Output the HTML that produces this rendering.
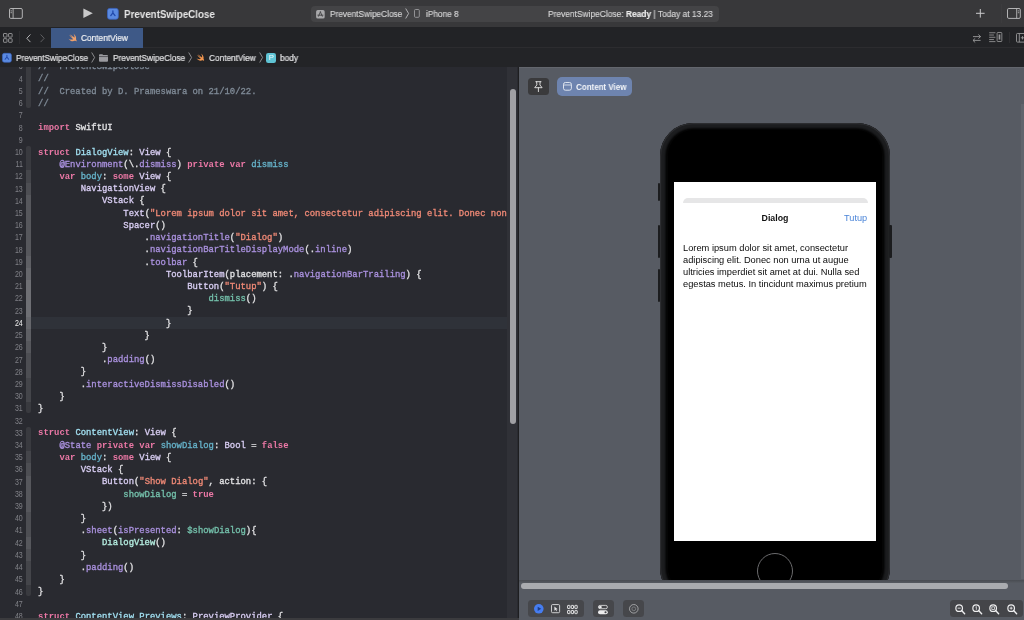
<!DOCTYPE html>
<html lang="en">
<head>
<meta charset="utf-8">
<title>PreventSwipeClose — ContentView.swift</title>
<style>
*{box-sizing:border-box;margin:0;padding:0}
html,body{width:1024px;height:620px;overflow:hidden;background:#292a30}
body{position:relative;font-family:"Liberation Sans",sans-serif;color:#dfdfe0;-webkit-font-smoothing:antialiased}
.abs{position:absolute}
svg{position:absolute;overflow:visible}
#title,.tb,.cr,#tab span,#cvpill span,#dlg,#tutup,#lorem{will-change:transform}

/* ---------- top toolbar ---------- */
#toolbar{position:absolute;left:0;top:0;width:1024px;height:27.5px;background:#38383a;border-bottom:1px solid #161618}
#title{position:absolute;left:123.5px;top:7.6px;transform:scaleX(0.916);transform-origin:0 50%;font-size:10.7px;line-height:13px;font-weight:bold;color:#e6e6e6;white-space:nowrap}
#pill{position:absolute;left:310.5px;top:5.6px;width:408px;height:16px;border-radius:4px;background:#444446}
.tb{position:absolute;top:7.5px;transform:scaleX(0.933);transform-origin:0 50%;font-size:8.9px;line-height:12px;color:#d6d6d7;-webkit-text-stroke:0.15px;white-space:nowrap}
.tb b{color:#ececec}

/* ---------- tab bar ---------- */
#tabbar{position:absolute;left:0;top:27px;width:1024px;height:20.5px;background:#222326;border-bottom:1px solid #2c2c2f}
#tab{position:absolute;left:51px;top:1px;width:92px;height:19.8px;background:#3e5987}
#tab span{position:absolute;left:29.5px;top:4px;-webkit-text-stroke:0.2px;transform:scaleX(0.918);transform-origin:0 50%;font-size:9.05px;line-height:12px;color:#f2f3f5;white-space:nowrap}

/* ---------- breadcrumb ---------- */
#crumbs{position:absolute;left:0;top:47.5px;width:1024px;height:19.5px;background:#232427}
.cr{position:absolute;top:4px;transform:scaleX(0.925);transform-origin:0 50%;font-size:8.95px;line-height:12px;color:#e2e2e4;-webkit-text-stroke:0.2px;white-space:nowrap}

/* ---------- editor ---------- */
#editor{position:absolute;left:0;top:67px;width:507.5px;height:551px;background:#292a30;overflow:hidden}
#codewrap{position:absolute;left:0;top:0;width:507.5px;height:551px;will-change:transform}
.cl,.ln{position:absolute;height:12.21px;line-height:12.21px;white-space:pre}
.cl{left:38.1px;font-family:"Liberation Mono",monospace;font-size:8.89px;color:#e1e1e3;-webkit-text-stroke:0.32px}
.ln{left:0;width:22.8px;text-align:right;font-family:"Liberation Sans",sans-serif;font-size:8.4px;color:#808187;transform:scaleX(0.84);transform-origin:100% 50%}
.ln.cur{color:#f0f0f0}
.rb{position:absolute;left:26.1px;width:4.8px;height:12.4px}
.hl{position:absolute;left:30.9px;width:480px;height:12.3px;background:#2f3239}
.k{color:#ec78a6;font-weight:bold;-webkit-text-stroke:0}
.c{color:#7f8a96}
.s{color:#ef8976}
.t{color:#a2dff0}
.d{color:#66b3ca}
.o{color:#d9cef3}
.u{color:#aa91de}
.g{color:#74c0ab}
.m{color:#b4ecdf}
#edbot{position:absolute;left:0;top:618px;width:519px;height:2px;background:#3b3b3e}
#vtrack{position:absolute;left:507.2px;top:67px;width:10.3px;height:551px;background:#303137}
#vthumb{position:absolute;left:509.8px;top:88.8px;width:6px;height:335.4px;border-radius:3px;background:#a0a0a4}
#vdiv{position:absolute;left:517.5px;top:67px;width:1.5px;height:553px;background:#1e1e20}

/* ---------- preview ---------- */
#preview{position:absolute;left:519px;top:67px;width:505px;height:553px;background:#575b63;overflow:hidden}
#ptop{position:absolute;left:0;top:0;width:505px;height:1px;background:#63666d}
#pin{position:absolute;left:9px;top:10.5px;width:20.5px;height:17.5px;border-radius:3.5px;background:#3a3a3c}
#cvpill{position:absolute;left:37.5px;top:9.5px;width:75.5px;height:19.5px;border-radius:5px;background:#6e84af}
#cvpill span{position:absolute;left:19px;top:4px;transform:scaleX(0.936);transform-origin:0 50%;font-size:8.6px;line-height:12px;font-weight:bold;color:#f4f6fa;white-space:nowrap;letter-spacing:-0.04px}
.grp{position:absolute;top:533.2px;height:17px;border-radius:3.5px;background:#46474b}
#hscroll{position:absolute;left:2px;top:516.2px;width:487px;height:5.8px;border-radius:2.9px;background:#aaacb0}
#rtrack{position:absolute;left:501.5px;top:37px;width:3.5px;height:475px;background:#60646c}

/* phone */
#phone{position:absolute;left:141.3px;top:55.8px;width:229.4px;height:478px;background:#000;border-radius:33px;box-shadow:inset 0 0 0 1.2px #2c2d30, inset 0 0 2.5px 5.6px #1d1e20}
#bezel{position:absolute;left:7.4px;top:7.4px;width:214.6px;height:463px;background:#000;border-radius:25.5px;box-shadow:0 0 1.2px 0.6px #060606}
.sb{position:absolute;width:2.4px;background:#1b1c1e;border-radius:1px}
#screen{position:absolute;left:155px;top:115.4px;width:202px;height:358.6px;background:#fff;overflow:hidden;color:#000}
#sheetbar{position:absolute;left:8.5px;top:15.4px;width:185px;height:5.5px;background:#e6e6e7;border-radius:5px 5px 0 0}
#dlg{position:absolute;left:0;width:202px;top:29.6px;text-align:center;font-size:8.8px;line-height:12px;font-weight:bold;color:#111}
#tutup{position:absolute;right:8.5px;top:29.6px;font-size:9.2px;line-height:12px;color:#4a84d8}
#lorem{position:absolute;left:9.2px;top:59.4px;width:192px;font-size:9.29px;line-height:12px;color:#0b0b0b;white-space:nowrap}
#home{position:absolute;left:238px;top:486px;width:36px;height:36px;border-radius:50%;border:1.1px solid #6b6b6d}
</style>
</head>
<body>

<!-- ================= TOOLBAR ================= -->
<div id="toolbar">
  <!-- sidebar toggle -->
  <svg style="left:9.1px;top:8px" width="14" height="11" viewBox="0 0 14 11"><rect x="0.5" y="0.5" width="12.8" height="9.9" rx="1.3" fill="none" stroke="#b9b9ba" stroke-width="0.95"/><path d="M4.1 0.5V10.4" stroke="#b9b9ba" stroke-width="0.9"/><path d="M1.5 2.9h1.5M1.5 4.7h1.5" stroke="#b9b9ba" stroke-width="0.8"/></svg>
  <!-- run -->
  <svg style="left:83px;top:8px" width="10" height="10.4" viewBox="0 0 10 10.4"><path d="M0.4 0.5 L9.8 5.2 L0.4 9.9 Z" fill="#c9c9ca"/></svg>
  <!-- app icon -->
  <svg style="left:107px;top:8px" width="11.8" height="11.6" viewBox="0 0 12 12"><rect x="0.4" y="0.4" width="11.2" height="11.2" rx="2.4" fill="#5b8ae0" stroke="#3a66c6" stroke-width="0.8"/><path d="M6 3 V5.2 M6 5 L3.8 7.8 M6 5 L8.2 7.8" stroke="#2149ab" stroke-width="1.35" fill="none" stroke-linecap="round"/></svg>
  <div id="title">PreventSwipeClose</div>

  <div id="pill"></div>
  <svg style="left:316px;top:9.5px" width="8.8" height="8.6" viewBox="0 0 12 12"><rect width="12" height="12" rx="2.4" fill="#a9a9ab"/><path d="M6 2.6 L3.4 8.7 M6 2.6 L8.6 8.7 M2.4 7.2 H9.6" stroke="#444446" stroke-width="1.3" fill="none" stroke-linecap="round"/></svg>
  <div class="tb" style="left:329.6px">PreventSwipeClose</div>
  <svg style="left:404.6px;top:8.4px" width="4.4" height="11" viewBox="0 0 4.4 11"><path d="M0.7 0.5 L3.6 5.5 L0.7 10.5" fill="none" stroke="#bdbdbf" stroke-width="0.9"/></svg>
  <svg style="left:414.2px;top:9.4px" width="5.8" height="8.8" viewBox="0 0 5.8 8.8"><rect x="0.5" y="0.5" width="4.8" height="7.8" rx="1" fill="none" stroke="#9d9d9f" stroke-width="0.9"/></svg>
  <div class="tb" style="left:425.8px">iPhone 8</div>
  <div class="tb" style="left:548.2px;font-size:9px">PreventSwipeClose: <b>Ready</b> | Today at 13.23</div>

  <!-- plus -->
  <svg style="left:976.4px;top:9.2px" width="8.6" height="8.6" viewBox="0 0 8.6 8.6"><path d="M4.3 0V8.6M0 4.3H8.6" stroke="#cbcbcc" stroke-width="1"/></svg>
  <div class="abs" style="left:1001.2px;top:4px;width:1px;height:19px;background:#3c3c3e"></div>
  <!-- right sidebar toggle -->
  <svg style="left:1007.1px;top:8px" width="14" height="11" viewBox="0 0 14 11"><rect x="0.5" y="0.5" width="12.8" height="9.9" rx="1.3" fill="none" stroke="#b9b9ba" stroke-width="0.95"/><path d="M9.7 0.5V10.4" stroke="#b9b9ba" stroke-width="0.9"/><path d="M10.8 2.9h1.5M10.8 4.7h1.5" stroke="#b9b9ba" stroke-width="0.8"/></svg>
</div>

<!-- ================= TAB BAR ================= -->
<div id="tabbar">
  <svg style="left:2.6px;top:6px" width="9.6" height="9.8" viewBox="0 0 9.6 9.8"><g fill="none" stroke="#9a9a9c" stroke-width="0.9"><rect x="0.5" y="0.5" width="3.5" height="3.6" rx="0.5"/><rect x="5.6" y="0.5" width="3.5" height="3.6" rx="0.5"/><rect x="0.5" y="5.7" width="3.5" height="3.6" rx="0.5"/><rect x="5.6" y="5.7" width="3.5" height="3.6" rx="0.5"/></g></svg>
  <div class="abs" style="left:18.6px;top:4px;width:1px;height:13px;background:#2d2d30"></div>
  <svg style="left:25.6px;top:6.6px" width="5" height="8.6" viewBox="0 0 5 8.6"><path d="M4.4 0.5 L0.8 4.3 L4.4 8.1" fill="none" stroke="#b4b4b6" stroke-width="1"/></svg>
  <svg style="left:39.8px;top:6.6px" width="5" height="8.6" viewBox="0 0 5 8.6"><path d="M0.6 0.5 L4.2 4.3 L0.6 8.1" fill="none" stroke="#5e5e61" stroke-width="1"/></svg>
  <div id="tab">
    <svg style="left:17.2px;top:4.6px" width="9.4" height="9.2" viewBox="0 0 10 10"><path d="M5.6 0.6 C8.4 2.6 9.2 5.2 8.6 6.8 C9.4 7.8 9.3 8.8 9.2 9.3 C8.6 8.3 7.8 8.2 7.2 8.5 C5.2 9.6 2.2 8.8 0.5 6.2 C2.2 7.3 4.2 7.5 5.6 6.7 C3.6 5.2 2 3.2 1.3 2 C2.8 3.3 4.4 4.5 5.2 5 C4.2 4 2.9 2.3 2.4 1.4 C4 2.9 6 4.6 6.9 5.1 C7.3 3.8 6.8 2.1 5.6 0.6 Z" fill="#f0a06a"/></svg>
    <span>ContentView</span>
  </div>
  <!-- right icons -->
  <svg style="left:972.4px;top:6.6px" width="9.6" height="9" viewBox="0 0 9.6 9"><g fill="none" stroke="#98989a" stroke-width="0.9"><path d="M1 2.6H8.6M6.4 0.5L8.6 2.6L6.4 4.6"/><path d="M8.6 6.4H1M3.2 4.4L1 6.4L3.2 8.5"/></g></svg>
  <svg style="left:989.2px;top:5.4px" width="13.6" height="10" viewBox="0 0 14 10.6"><g fill="none" stroke="#98989a" stroke-width="0.9"><path d="M0 0.8H6.6M0 3.2H5M0 5.6H6.6M0 8H5M0 10.2H6.6"/><rect x="8.4" y="0.5" width="5" height="9.6" rx="0.8"/><rect x="10" y="2.6" width="1.8" height="5.4" fill="#98989a" stroke="none"/></g></svg>
  <div class="abs" style="left:1008.8px;top:5px;width:1px;height:11px;background:#2e2e31"></div>
  <svg style="left:1016px;top:6px" width="8" height="9.6" viewBox="0 0 8 9.6"><g fill="none" stroke="#98989a" stroke-width="0.9"><rect x="0.5" y="0.5" width="12" height="8.6" rx="0.9"/><path d="M3.3 0.5V9.1M4.8 4.8H8M6.5 3.1V6.5"/></g></svg>
</div>

<!-- ================= BREADCRUMBS ================= -->
<div id="crumbs">
  <svg style="left:2.2px;top:5.4px" width="9.8" height="9.6" viewBox="0 0 12 12"><rect x="0.4" y="0.4" width="11.2" height="11.2" rx="2.4" fill="#5b8ae0" stroke="#3a66c6" stroke-width="0.8"/><path d="M6 3 V5.2 M6 5 L3.8 7.8 M6 5 L8.2 7.8" stroke="#2149ab" stroke-width="1.35" fill="none" stroke-linecap="round"/></svg>
  <div class="cr" style="left:15.5px">PreventSwipeClose</div>
  <svg style="left:91px;top:4.4px" width="4.4" height="11" viewBox="0 0 4.4 11"><path d="M0.7 0.5 L3.6 5.5 L0.7 10.5" fill="none" stroke="#98989b" stroke-width="0.9"/></svg>
  <svg style="left:98.8px;top:6.2px" width="9" height="7.8" viewBox="0 0 9.4 7.8"><path d="M0 1 Q0 0 1 0 H3.4 L4.4 1 H8.4 Q9.4 1 9.4 2 V6.8 Q9.4 7.8 8.4 7.8 H1 Q0 7.8 0 6.8 Z" fill="#9b9ba0"/><path d="M0 2.5H9.4" stroke="#2a2a2d" stroke-width="0.6"/></svg>
  <div class="cr" style="left:113px">PreventSwipeClose</div>
  <svg style="left:187.6px;top:4.4px" width="4.4" height="11" viewBox="0 0 4.4 11"><path d="M0.7 0.5 L3.6 5.5 L0.7 10.5" fill="none" stroke="#98989b" stroke-width="0.9"/></svg>
  <svg style="left:195.8px;top:5.8px" width="8.8" height="8.6" viewBox="0 0 10 10"><path d="M5.6 0.6 C8.4 2.6 9.2 5.2 8.6 6.8 C9.4 7.8 9.3 8.8 9.2 9.3 C8.6 8.3 7.8 8.2 7.2 8.5 C5.2 9.6 2.2 8.8 0.5 6.2 C2.2 7.3 4.2 7.5 5.6 6.7 C3.6 5.2 2 3.2 1.3 2 C2.8 3.3 4.4 4.5 5.2 5 C4.2 4 2.9 2.3 2.4 1.4 C4 2.9 6 4.6 6.9 5.1 C7.3 3.8 6.8 2.1 5.6 0.6 Z" fill="#f2964f"/></svg>
  <div class="cr" style="left:208.6px">ContentView</div>
  <svg style="left:258.6px;top:4.4px" width="4.4" height="11" viewBox="0 0 4.4 11"><path d="M0.7 0.5 L3.6 5.5 L0.7 10.5" fill="none" stroke="#98989b" stroke-width="0.9"/></svg>
  <div class="abs" style="left:266.2px;top:5.4px;width:10.2px;height:9.8px;border-radius:2.2px;background:#60c4d5;color:#f4fcfd;font-size:7.8px;line-height:10px;text-align:center">P</div>
  <div class="cr" style="left:279.8px">body</div>
</div>

<!-- ================= EDITOR ================= -->
<div id="editor"><div id="codewrap">
<div class="rb" style="top:-6.28px;background:#3a3b40;height:12.1px;border-radius:2px 2px 0 0"></div>
<div class="ln" style="top:-6.53px">3</div>
<div class="cl" style="top:-5.83px"><span class="c">//  PreventSwipeClose</span></div>
<div class="rb" style="top:5.63px;background:#3a3b40"></div>
<div class="ln" style="top:5.68px">4</div>
<div class="cl" style="top:6.38px"><span class="c">//</span></div>
<div class="rb" style="top:17.84px;background:#3a3b40"></div>
<div class="ln" style="top:17.89px">5</div>
<div class="cl" style="top:18.59px"><span class="c">//  Created by D. Prameswara on 21/10/22.</span></div>
<div class="rb" style="top:30.05px;background:#3a3b40;height:10.8px;border-radius:0 0 2px 2px"></div>
<div class="ln" style="top:30.10px">6</div>
<div class="cl" style="top:30.80px"><span class="c">//</span></div>
<div class="ln" style="top:42.31px">7</div>
<div class="ln" style="top:54.52px">8</div>
<div class="cl" style="top:55.22px"><span class="k">import</span> SwiftUI</div>
<div class="ln" style="top:66.73px">9</div>
<div class="rb" style="top:79.19px;background:#393a3f;height:12.1px;border-radius:2px 2px 0 0"></div>
<div class="ln" style="top:78.94px">10</div>
<div class="cl" style="top:79.64px"><span class="k">struct</span> <span class="t">DialogView</span>: <span class="o">View</span> {</div>
<div class="rb" style="top:91.10px;background:#393a3f"></div>
<div class="ln" style="top:91.15px">11</div>
<div class="cl" style="top:91.85px">    <span class="u">@Environment</span>(\.<span class="u">dismiss</span>) <span class="k">private</span> <span class="k">var</span> <span class="d">dismiss</span></div>
<div class="rb" style="top:103.31px;background:#44454a"></div>
<div class="ln" style="top:103.36px">12</div>
<div class="cl" style="top:104.06px">    <span class="k">var</span> <span class="d">body</span>: <span class="k">some</span> <span class="o">View</span> {</div>
<div class="rb" style="top:115.52px;background:#4d4e53"></div>
<div class="ln" style="top:115.57px">13</div>
<div class="cl" style="top:116.27px">        <span class="o">NavigationView</span> {</div>
<div class="rb" style="top:127.73px;background:#56575c"></div>
<div class="ln" style="top:127.78px">14</div>
<div class="cl" style="top:128.48px">            <span class="o">VStack</span> {</div>
<div class="rb" style="top:139.94px;background:#56575c"></div>
<div class="ln" style="top:139.99px">15</div>
<div class="cl" style="top:140.69px">                <span class="o">Text</span>(<span class="s">"Lorem ipsum dolor sit amet, consectetur adipiscing elit. Donec non</span></div>
<div class="rb" style="top:152.15px;background:#56575c"></div>
<div class="ln" style="top:152.20px">16</div>
<div class="cl" style="top:152.90px">                <span class="o">Spacer</span>()</div>
<div class="rb" style="top:164.36px;background:#56575c"></div>
<div class="ln" style="top:164.41px">17</div>
<div class="cl" style="top:165.11px">                    .<span class="u">navigationTitle</span>(<span class="s">"Dialog"</span>)</div>
<div class="rb" style="top:176.57px;background:#56575c"></div>
<div class="ln" style="top:176.62px">18</div>
<div class="cl" style="top:177.32px">                    .<span class="u">navigationBarTitleDisplayMode</span>(.<span class="u">inline</span>)</div>
<div class="rb" style="top:188.78px;background:#5e5f64"></div>
<div class="ln" style="top:188.83px">19</div>
<div class="cl" style="top:189.53px">                    .<span class="u">toolbar</span> {</div>
<div class="rb" style="top:200.99px;background:#66676c"></div>
<div class="ln" style="top:201.04px">20</div>
<div class="cl" style="top:201.74px">                        <span class="o">ToolbarItem</span>(placement: .<span class="u">navigationBarTrailing</span>) {</div>
<div class="rb" style="top:213.20px;background:#6e6f74"></div>
<div class="ln" style="top:213.25px">21</div>
<div class="cl" style="top:213.95px">                            <span class="o">Button</span>(<span class="s">"Tutup"</span>) {</div>
<div class="rb" style="top:225.41px;background:#6e6f74"></div>
<div class="ln" style="top:225.46px">22</div>
<div class="cl" style="top:226.16px">                                <span class="g">dismiss</span>()</div>
<div class="rb" style="top:237.62px;background:#6e6f74"></div>
<div class="ln" style="top:237.67px">23</div>
<div class="cl" style="top:238.37px">                            }</div>
<div class="hl" style="top:250.13px"></div>
<div class="rb" style="top:249.83px;background:#66676c"></div>
<div class="ln cur" style="top:249.88px">24</div>
<div class="cl" style="top:250.58px">                        }</div>
<div class="rb" style="top:262.04px;background:#5e5f64"></div>
<div class="ln" style="top:262.09px">25</div>
<div class="cl" style="top:262.79px">                    }</div>
<div class="rb" style="top:274.25px;background:#56575c"></div>
<div class="ln" style="top:274.30px">26</div>
<div class="cl" style="top:275.00px">            }</div>
<div class="rb" style="top:286.46px;background:#4d4e53"></div>
<div class="ln" style="top:286.51px">27</div>
<div class="cl" style="top:287.21px">            .<span class="u">padding</span>()</div>
<div class="rb" style="top:298.67px;background:#4d4e53"></div>
<div class="ln" style="top:298.72px">28</div>
<div class="cl" style="top:299.42px">        }</div>
<div class="rb" style="top:310.88px;background:#44454a"></div>
<div class="ln" style="top:310.93px">29</div>
<div class="cl" style="top:311.63px">        .<span class="u">interactiveDismissDisabled</span>()</div>
<div class="rb" style="top:323.09px;background:#44454a"></div>
<div class="ln" style="top:323.14px">30</div>
<div class="cl" style="top:323.84px">    }</div>
<div class="rb" style="top:335.30px;background:#393a3f;height:10.8px;border-radius:0 0 2px 2px"></div>
<div class="ln" style="top:335.35px">31</div>
<div class="cl" style="top:336.05px">}</div>
<div class="ln" style="top:347.56px">32</div>
<div class="rb" style="top:360.02px;background:#393a3f;height:12.1px;border-radius:2px 2px 0 0"></div>
<div class="ln" style="top:359.77px">33</div>
<div class="cl" style="top:360.47px"><span class="k">struct</span> <span class="t">ContentView</span>: <span class="o">View</span> {</div>
<div class="rb" style="top:371.93px;background:#393a3f"></div>
<div class="ln" style="top:371.98px">34</div>
<div class="cl" style="top:372.68px">    <span class="u">@State</span> <span class="k">private</span> <span class="k">var</span> <span class="d">showDialog</span>: <span class="o">Bool</span> = <span class="k">false</span></div>
<div class="rb" style="top:384.14px;background:#44454a"></div>
<div class="ln" style="top:384.19px">35</div>
<div class="cl" style="top:384.89px">    <span class="k">var</span> <span class="d">body</span>: <span class="k">some</span> <span class="o">View</span> {</div>
<div class="rb" style="top:396.35px;background:#4d4e53"></div>
<div class="ln" style="top:396.40px">36</div>
<div class="cl" style="top:397.10px">        <span class="o">VStack</span> {</div>
<div class="rb" style="top:408.56px;background:#56575c"></div>
<div class="ln" style="top:408.61px">37</div>
<div class="cl" style="top:409.31px">            <span class="o">Button</span>(<span class="s">"Show Dialog"</span>, action: {</div>
<div class="rb" style="top:420.77px;background:#56575c"></div>
<div class="ln" style="top:420.82px">38</div>
<div class="cl" style="top:421.52px">                <span class="g">showDialog</span> = <span class="k">true</span></div>
<div class="rb" style="top:432.98px;background:#56575c"></div>
<div class="ln" style="top:433.03px">39</div>
<div class="cl" style="top:433.73px">            })</div>
<div class="rb" style="top:445.19px;background:#4d4e53"></div>
<div class="ln" style="top:445.24px">40</div>
<div class="cl" style="top:445.94px">        }</div>
<div class="rb" style="top:457.40px;background:#4d4e53"></div>
<div class="ln" style="top:457.45px">41</div>
<div class="cl" style="top:458.15px">        .<span class="u">sheet</span>(<span class="u">isPresented</span>: <span class="g">$showDialog</span>){</div>
<div class="rb" style="top:469.61px;background:#56575c"></div>
<div class="ln" style="top:469.66px">42</div>
<div class="cl" style="top:470.36px">            <span class="m">DialogView</span>()</div>
<div class="rb" style="top:481.82px;background:#4d4e53"></div>
<div class="ln" style="top:481.87px">43</div>
<div class="cl" style="top:482.57px">        }</div>
<div class="rb" style="top:494.03px;background:#44454a"></div>
<div class="ln" style="top:494.08px">44</div>
<div class="cl" style="top:494.78px">        .<span class="u">padding</span>()</div>
<div class="rb" style="top:506.24px;background:#44454a"></div>
<div class="ln" style="top:506.29px">45</div>
<div class="cl" style="top:506.99px">    }</div>
<div class="rb" style="top:518.45px;background:#393a3f;height:10.8px;border-radius:0 0 2px 2px"></div>
<div class="ln" style="top:518.50px">46</div>
<div class="cl" style="top:519.20px">}</div>
<div class="ln" style="top:530.71px">47</div>
<div class="ln" style="top:542.92px">48</div>
<div class="cl" style="top:543.62px"><span class="k">struct</span> <span class="t">ContentView_Previews</span>: <span class="o">PreviewProvider</span> {</div>
</div></div>
<div id="vtrack"></div>
<div id="vthumb"></div>
<div id="vdiv"></div>
<div id="edbot"></div>

<!-- ================= PREVIEW ================= -->
<div id="preview">
  <div id="ptop"></div>
  <div id="rtrack"></div>
  <div id="pin">
    <svg style="left:0;top:0" width="20.5" height="17.5" viewBox="0 0 20.5 17.5"><g fill="none" stroke="#e6e6e7" stroke-width="0.9" stroke-linejoin="round" stroke-linecap="round"><path d="M7.8 3.7H13M8.6 3.7L8.9 6.9L6.7 9.7H14.1L11.9 6.9L12.2 3.7"/><path d="M10.4 9.7V13.6"/></g></svg>
  </div>
  <div id="cvpill">
    <svg style="left:6.5px;top:5.6px" width="9" height="8.8" viewBox="0 0 9 8.8"><g fill="none" stroke="#e9edf5" stroke-width="0.9"><rect x="0.5" y="0.5" width="7.9" height="7.7" rx="1.9"/><path d="M0.6 3H8.3" stroke-width="0.8"/></g></svg>
    <span>Content View</span>
  </div>

  <!-- phone -->
  <div id="phone"><div id="bezel"></div></div>
  <div class="sb" style="left:139px;top:116.3px;height:18.2px"></div>
  <div class="sb" style="left:139px;top:157.6px;height:33.2px"></div>
  <div class="sb" style="left:139px;top:201.6px;height:33.2px"></div>
  <div class="sb" style="left:370.4px;top:157.6px;height:33.2px"></div>
  <div id="screen">
    <div id="sheetbar"></div>
    <div id="dlg">Dialog</div>
    <div id="tutup">Tutup</div>
    <div id="lorem">Lorem ipsum dolor sit amet, consectetur<br>adipiscing elit. Donec non urna ut augue<br>ultricies imperdiet sit amet at dui. Nulla sed<br>egestas metus. In tincidunt maximus pretium</div>
  </div>
  <div id="home"></div>
  <div class="abs" style="left:0;top:513.3px;width:505px;height:39.7px;background:#575b63"></div>
  <div class="abs" style="left:0;top:513.3px;width:505px;height:2.9px;background:linear-gradient(#494c52,#565a61)"></div>
  <div id="hscroll"></div>

  <!-- bottom-left controls -->
  <div class="grp" style="left:9.2px;width:55.5px">
    <svg style="left:5.4px;top:4.1px" width="9.6" height="9.6" viewBox="0 0 9.6 9.6"><circle cx="4.8" cy="4.8" r="4.8" fill="#467df0"/><path d="M3.7 2.7 L7.2 4.8 L3.7 6.9 Z" fill="#1c3d88"/></svg>
    <svg style="left:22.8px;top:4.3px" width="9.1" height="9.3" viewBox="0 0 9.6 9.6"><rect x="0.5" y="0.5" width="8.6" height="8.6" rx="1.2" fill="none" stroke="#e6e6e7" stroke-width="0.9"/><path d="M3.6 2.4 L3.6 7 L4.8 5.9 L5.6 7.6 L6.3 7.3 L5.5 5.6 L7 5.5 Z" fill="#e6e6e7"/></svg>
    <svg style="left:39px;top:4.8px" width="10.8" height="9" viewBox="0 0 10.6 9.2"><g fill="none" stroke="#e6e6e7" stroke-width="1"><rect x="0.4" y="0.4" width="2.4" height="3.2" rx="0.4"/><rect x="4.1" y="0.4" width="2.4" height="3.2" rx="0.4"/><rect x="7.8" y="0.4" width="2.4" height="3.2" rx="0.4"/><rect x="0.4" y="5.6" width="2.4" height="3.2" rx="0.4"/><rect x="4.1" y="5.6" width="2.4" height="3.2" rx="0.4"/><rect x="7.8" y="5.6" width="2.4" height="3.2" rx="0.4"/></g></svg>
  </div>
  <div class="grp" style="left:73.5px;width:21.5px">
    <svg style="left:5.9px;top:4.7px" width="9.8" height="9.2" viewBox="0 0 10 9.4"><rect x="0.4" y="0.4" width="9.2" height="3.4" rx="1.7" fill="none" stroke="#ececed" stroke-width="0.8"/><rect x="0.9" y="0.9" width="3" height="2.4" rx="1.2" fill="#ececed"/><rect x="0" y="5.4" width="10" height="4" rx="2" fill="#ececed"/><circle cx="7.7" cy="7.4" r="1.1" fill="#46474b"/></svg>
  </div>
  <div class="grp" style="left:104px;width:21.2px">
    <svg style="left:5.6px;top:4.3px" width="9.6" height="9.6" viewBox="0 0 9.6 9.6"><circle cx="4.8" cy="4.8" r="4.3" fill="none" stroke="#a9aaad" stroke-width="0.9"/><circle cx="4.8" cy="4.8" r="1.9" fill="none" stroke="#8d8e91" stroke-width="0.7"/></svg>
  </div>

  <!-- bottom-right zoom controls -->
  <div class="grp" style="left:430.5px;width:73px;background:#444549">
    <svg style="left:5.3px;top:3.9px" width="10.4" height="10.4" viewBox="0 0 11 11"><g fill="none" stroke="#efeff0" stroke-width="1.25"><circle cx="4.4" cy="4.4" r="3.5"/><path d="M7 7 L10.2 10.2" stroke-linecap="round" stroke-width="1.5"/><path d="M2.8 4.4H6" stroke-width="0.9"/></g></svg>
    <svg style="left:22.5px;top:3.9px" width="10.4" height="10.4" viewBox="0 0 11 11"><g fill="none" stroke="#efeff0" stroke-width="1.25"><circle cx="4.4" cy="4.4" r="3.5"/><path d="M7 7 L10.2 10.2" stroke-linecap="round" stroke-width="1.5"/><path d="M3.8 3.2 L4.6 2.7 V6.2" stroke-width="0.8"/></g></svg>
    <svg style="left:39.8px;top:3.9px" width="10.4" height="10.4" viewBox="0 0 11 11"><g fill="none" stroke="#efeff0" stroke-width="1.25"><circle cx="4.4" cy="4.4" r="3.5"/><path d="M7 7 L10.2 10.2" stroke-linecap="round" stroke-width="1.5"/><rect x="3" y="3" width="2.8" height="2.8" stroke-width="0.8"/></g></svg>
    <svg style="left:57.1px;top:3.9px" width="10.4" height="10.4" viewBox="0 0 11 11"><g fill="none" stroke="#efeff0" stroke-width="1.25"><circle cx="4.4" cy="4.4" r="3.5"/><path d="M7 7 L10.2 10.2" stroke-linecap="round" stroke-width="1.5"/><path d="M2.8 4.4H6M4.4 2.8V6" stroke-width="0.9"/></g></svg>
  </div>
</div>

</body>
</html>
